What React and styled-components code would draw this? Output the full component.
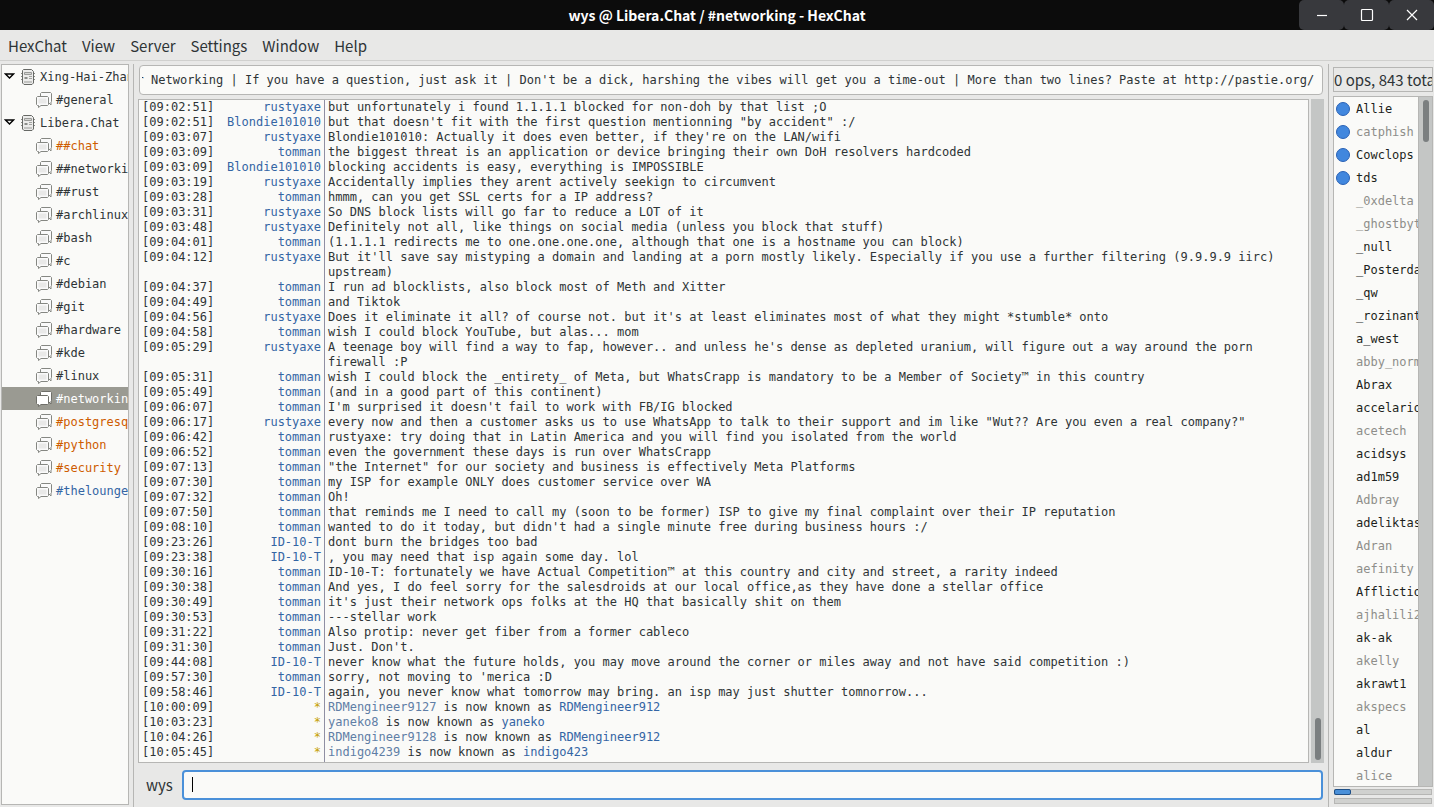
import React, { useLayoutEffect, useRef } from "react";
import styled, { createGlobalStyle, css } from "styled-components";

const ui = '"Noto Sans CJK SC", "Noto Sans", sans-serif';
const mono = '"DejaVu Sans Mono", "Liberation Mono", monospace';
const color = {
  chrome: "#e8e8e7",
  base: "#fafaf8",
  line: "#b6b6b4",
  text: "#2e3436",
  muted: "#8e8e8a",
  blue: "#3465a4",
  orange: "#ce5c00",
  yellow: "#c4a000",
  accent: "#4a90d9",
  trough: "#c4c6c5",
  thumb: "#7b7f80",
};

const GlobalStyle = createGlobalStyle`
  *, *::before, *::after { box-sizing: border-box; }
  body { margin: 0; background: ${color.chrome}; color: ${color.text}; font: 15px/24px ${ui}; overflow: hidden; }
  button, input { font: inherit; color: inherit; }
  ul { list-style: none; margin: 0; padding: 0; }
`;

const Window = styled.div`
  display: flex;
  flex-direction: column;
  height: 100vh;
  overflow: hidden;
`;

const TitleBar = styled.header`
  display: grid;
  grid-template-columns: 1fr auto 1fr;
  align-items: center;
  flex: none;
  height: 30px;
  background: #0c0c0c;
`;

const Title = styled.h1`
  grid-column: 2;
  margin: 0;
  color: #fff;
  font-size: 14px;
  line-height: 24px;
  font-weight: 700;
  white-space: nowrap;
`;

const WindowControls = styled.div`
  display: flex;
  justify-content: flex-end;
`;

const WindowButton = styled.button`
  display: grid;
  place-items: center;
  width: 45px;
  height: 30px;
  padding: 0;
  border: 0;
  border-radius: 5px;
  background: #38393d;
  color: #fff;
`;

const MenuBar = styled.nav`
  display: flex;
  align-items: center;
  gap: 15px;
  flex: none;
  height: 31px;
  margin-bottom: 3px;
  padding: 2px 8px 0;
  border-bottom: 1px solid #d0d0ce;
`;

const MenuItem = styled.button`
  padding: 0;
  border: 0;
  background: none;
  white-space: nowrap;
`;

const Panes = styled.main`
  display: flex;
  flex: 1;
  min-height: 0;
`;

const TreePane = styled.nav`
  flex: none;
  width: 128px;
  margin: 0 4px 2px 1px;
  border: 1px solid ${color.line};
  background: ${color.base};
  overflow: hidden;
`;

const treeColors = { hot: color.orange, data: color.blue };

const TreeRow = styled.li`
  display: flex;
  align-items: center;
  height: 23px;
  padding-left: ${(p) => (p.$root ? 1 : 34)}px;
  font: 12px/16px ${mono};
  white-space: nowrap;
  color: ${(p) => treeColors[p.$state] || color.text};
  ${(p) =>
    p.$state === "selected" &&
    css`
      background: #9a9a92;
      color: #fff;
    `}
`;

const TreeToggle = styled.button`
  display: grid;
  place-items: center;
  flex: none;
  width: 12px;
  height: 16px;
  margin-right: 5px;
  padding: 0;
  border: 0;
  background: none;
`;

const TreeIcon = styled.span`
  display: grid;
  flex: none;
  width: 18px;
  height: 16px;
  margin-right: 2px;
`;

const Splitter = styled.div`
  flex: none;
  width: 1px;
  background: ${color.line};
`;

const ChatPane = styled.section`
  display: flex;
  flex: 1;
  flex-direction: column;
  min-width: 0;
  padding: 0 4px 7px;
`;

const Topic = styled.input`
  flex: none;
  width: calc(100% - 2px);
  height: 30px;
  margin: 1px 0 4px 1px;
  padding: 0 8px 0 2px;
  border: 1px solid ${color.line};
  border-radius: 4px;
  background: ${color.base};
  outline: 0;
  && { font: 12px/16px ${mono}; }
`;

const LogRow = styled.div`
  display: flex;
  flex: 1;
  gap: 2px;
  min-height: 0;
`;

const Log = styled.div`
  display: flex;
  flex: 1;
  flex-direction: column;
  min-width: 0;
  border: 1px solid ${color.line};
  background: ${color.base};
  font: 12px/15px ${mono};
  overflow: hidden;
`;

const Message = styled.div`
  display: grid;
  grid-template-columns: 80px 102px 1fr;
  flex: none;
  padding-left: 3px;
`;

const Time = styled.time`
  white-space: pre;
`;

const Nick = styled.span`
  padding-right: 3px;
  text-align: right;
  white-space: pre;
  color: ${(p) => (p.$event ? color.yellow : color.blue)};
`;

const Body = styled.span`
  padding-left: 3px;
  border-left: 1px solid #8f8fa3;
`;

const OldName = styled.span`
  color: #5f7ea6;
`;

const NewName = styled.span`
  color: ${color.blue};
`;

const LogTail = styled.div`
  flex: 1;
  margin-left: 185px;
  border-left: 1px solid #8f8fa3;
`;

const Scrollbar = styled.div`
  display: flex;
  flex-direction: column;
  flex: none;
  justify-content: ${(p) => (p.$end ? "flex-end" : "flex-start")};
  width: 13px;
  padding: 3px 3px 3px 4px;
  background: ${color.trough};
`;

const Thumb = styled.div`
  width: 6px;
  height: 42px;
  border-radius: 3px;
  background: ${color.thumb};
`;

const Composer = styled.form`
  display: flex;
  align-items: center;
  flex: none;
  gap: 9px;
  height: 30px;
  margin-top: 7px;
  padding: 0 1px 0 8px;
`;

const InputWrap = styled.div`
  display: flex;
  flex: 1;
  position: relative;
`;

const MessageInput = styled.input`
  flex: 1;
  min-width: 0;
  height: 30px;
  padding: 0 8px;
  border: 2px solid ${color.accent};
  border-radius: 4px;
  background: ${color.base};
  outline: 0;
  && { font: 12px/16px ${mono}; }
`;

const Caret = styled.span`
  position: absolute;
  left: 10px;
  top: 7px;
  width: 1px;
  height: 15px;
  background: #000;
`;

const UsersPane = styled.aside`
  display: flex;
  flex: none;
  flex-direction: column;
  width: 105px;
  padding: 3px 1px 3px 4px;
`;

const UserCount = styled.div`
  flex: none;
  height: 25px;
  margin-bottom: 4px;
  border: 1px solid ${color.line};
  line-height: 24px;
  white-space: nowrap;
  overflow: hidden;
`;

const UserBox = styled.div`
  display: flex;
  flex: 1;
  min-height: 0;
  border: 1px solid ${color.line};
  background: ${color.base};
`;

const UserList = styled.ul`
  flex: 1;
  min-width: 0;
  overflow: hidden;
  border-right: 1px solid ${color.line};
`;

const User = styled.li`
  display: flex;
  align-items: center;
  gap: 6px;
  height: 23px;
  padding-left: 2px;
  font: 12px/16px ${mono};
  white-space: nowrap;
  color: ${(p) => (p.$away ? color.muted : "#1c1f20")};
`;

const OpMark = styled.span`
  flex: none;
  width: 14px;
  height: 14px;
  border-radius: 50%;
  ${(p) =>
    p.$shown &&
    css`
      border: 1px solid #2a62b5;
      background: #4187de;
    `}
`;

const Meter = styled.div`
  flex: none;
  height: 6px;
  margin: ${(p) => p.$gap}px 1px 0;
  border: 1px solid ${color.line};
  background: #d0d1cf;
`;

const MeterFill = styled.div`
  width: 17px;
  height: 6px;
  margin: -1px;
  border: 1px solid #1f4f86;
  border-radius: 2px;
  background: ${color.accent};
`;

const ServerIcon = () => (
  <svg width="16" height="16" viewBox="0 0 16 16" fill="none" aria-hidden="true">
    <path d="M1 4.5h2M1 7.500h2M1 10.500h2M13 4.500h2M13 7.500h2M13 10.500h2" stroke="#8b8d89" />
    <path d="M3.500.5h8l2 2v11.500l-1.500 1.500h-8L2.500 14V1.500z" fill="#ececeb" stroke="#666865" />
    <path d="M4.500 3.500h7v2h-7z" fill="#d5d6d4" stroke="#9a9b98" />
    <path d="M4.500 8h3v2h-3z" fill="#8b8d89" />
    <path d="M9 7.500h3M9 9.500h3" stroke="#a2a3a0" />
    <path d="M5 12v2M7 12v2M9 12v2M11 12v2" stroke="#9a9b98" />
  </svg>
);

const ChannelIcon = ({ selected }) => {
  const stroke = selected ? "#6f6f69" : "#858782";
  const fill = selected ? "#fff" : "#fafafa";
  return (
    <svg width="17" height="16" viewBox="0 0 17 16" fill="none" aria-hidden="true">
      <path d="M5.500.5h9l1 1v8l-.5.5v3l-2.500-2.500H4.500v-9z" fill={fill} stroke={stroke} />
      <path d="M1.500 4.500h10l1 1v7l-1 1H5l-2.500 2v-2h-1l-1-1v-7z" fill={fill} stroke={stroke} />
      <path d="M2.500 6.500h8v5h-8z" fill={selected ? "#fff" : "#e9e9e8"} />
    </svg>
  );
};

const ToggleIcon = () => (
  <svg width="11" height="7" viewBox="0 0 11 7" fill="none" aria-hidden="true">
    <path d="M1.500 1h8l-4 4z" stroke="#000" strokeWidth="1.400" />
  </svg>
);

const WindowGlyph = ({ d }) => (
  <svg width="14" height="14" viewBox="0 0 14 14" fill="none" stroke="#fff" strokeWidth="1.200" aria-hidden="true">
    <path d={d} />
  </svg>
);

const controls = [
  ["Minimize", "M2 7.500h10"],
  ["Maximize", "M2.500 1.500h9q1 0 1 1v9q0 1-1 1h-9q-1 0-1-1v-9q0-1 1-1z"],
  ["Close", "M2 2l10 10M12 2L2 12"],
];

const menus = ["HexChat", "View", "Server", "Settings", "Window", "Help"];

const tree = [
  ["Xing-Hai-Zhan", "root"],
  ["#general"],
  ["Libera.Chat", "root"],
  ["##chat", "hot"],
  ["##networking"],
  ["##rust"],
  ["#archlinux"],
  ["#bash"],
  ["#c"],
  ["#debian"],
  ["#git"],
  ["#hardware"],
  ["#kde"],
  ["#linux"],
  ["#networking", "selected"],
  ["#postgresql", "hot"],
  ["#python", "hot"],
  ["#security", "hot"],
  ["#thelounge", "data"],
];

const topic =
  "Computer Networking | If you have a question, just ask it | Don't be a dick, harshing the vibes will get you a time-out | More than two lines? Paste at http://pastie.org/";

const messages = [
  ["09:02:51", "rustyaxe", "but unfortunately i found 1.1.1.1 blocked for non-doh by that list ;O"],
  ["09:02:51", "Blondie101010", "but that doesn't fit with the first question mentionning \"by accident\" :/"],
  ["09:03:07", "rustyaxe", "Blondie101010: Actually it does even better, if they're on the LAN/wifi"],
  ["09:03:09", "tomman", "the biggest threat is an application or device bringing their own DoH resolvers hardcoded"],
  ["09:03:09", "Blondie101010", "blocking accidents is easy, everything is IMPOSSIBLE"],
  ["09:03:19", "rustyaxe", "Accidentally implies they arent actively seekign to circumvent"],
  ["09:03:28", "tomman", "hmmm, can you get SSL certs for a IP address?"],
  ["09:03:31", "rustyaxe", "So DNS block lists will go far to reduce a LOT of it"],
  ["09:03:48", "rustyaxe", "Definitely not all, like things on social media (unless you block that stuff)"],
  ["09:04:01", "tomman", "(1.1.1.1 redirects me to one.one.one.one, although that one is a hostname you can block)"],
  ["09:04:12", "rustyaxe", "But it'll save say mistyping a domain and landing at a porn mostly likely. Especially if you use a further filtering (9.9.9.9 iirc) upstream)"],
  ["09:04:37", "tomman", "I run ad blocklists, also block most of Meth and Xitter"],
  ["09:04:49", "tomman", "and Tiktok"],
  ["09:04:56", "rustyaxe", "Does it eliminate it all? of course not. but it's at least eliminates most of what they might *stumble* onto"],
  ["09:04:58", "tomman", "wish I could block YouTube, but alas... mom"],
  ["09:05:29", "rustyaxe", "A teenage boy will find a way to fap, however.. and unless he's dense as depleted uranium, will figure out a way around the porn firewall :P"],
  ["09:05:31", "tomman", "wish I could block the _entirety_ of Meta, but WhatsCrapp is mandatory to be a Member of Society™ in this country"],
  ["09:05:49", "tomman", "(and in a good part of this continent)"],
  ["09:06:07", "tomman", "I'm surprised it doesn't fail to work with FB/IG blocked"],
  ["09:06:17", "rustyaxe", "every now and then a customer asks us to use WhatsApp to talk to their support and im like \"Wut?? Are you even a real company?\""],
  ["09:06:42", "tomman", "rustyaxe: try doing that in Latin America and you will find you isolated from the world"],
  ["09:06:52", "tomman", "even the government these days is run over WhatsCrapp"],
  ["09:07:13", "tomman", "\"the Internet\" for our society and business is effectively Meta Platforms"],
  ["09:07:30", "tomman", "my ISP for example ONLY does customer service over WA"],
  ["09:07:32", "tomman", "Oh!"],
  ["09:07:50", "tomman", "that reminds me I need to call my (soon to be former) ISP to give my final complaint over their IP reputation"],
  ["09:08:10", "tomman", "wanted to do it today, but didn't had a single minute free during business hours :/"],
  ["09:23:26", "ID-10-T", "dont burn the bridges too bad"],
  ["09:23:38", "ID-10-T", ", you may need that isp again some day. lol"],
  ["09:30:16", "tomman", "ID-10-T: fortunately we have Actual Competition™ at this country and city and street, a rarity indeed"],
  ["09:30:38", "tomman", "And yes, I do feel sorry for the salesdroids at our local office,as they have done a stellar office"],
  ["09:30:49", "tomman", "it's just their network ops folks at the HQ that basically shit on them"],
  ["09:30:53", "tomman", "---stellar work"],
  ["09:31:22", "tomman", "Also protip: never get fiber from a former cableco"],
  ["09:31:30", "tomman", "Just. Don't."],
  ["09:44:08", "ID-10-T", "never know what the future holds, you may move around the corner or miles away and not have said competition :)"],
  ["09:57:30", "tomman", "sorry, not moving to 'merica :D"],
  ["09:58:46", "ID-10-T", "again, you never know what tomorrow may bring. an isp may just shutter tomnorrow..."],
];

const renames = [
  ["10:00:09", "RDMengineer9127", "RDMengineer912"],
  ["10:03:23", "yaneko8", "yaneko"],
  ["10:04:26", "RDMengineer9128", "RDMengineer912"],
  ["10:05:45", "indigo4239", "indigo423"],
];

const users = [
  ["Allie", 0, 1], ["catphish", 1, 1], ["Cowclops", 0, 1], ["tds", 0, 1],
  ["_0xdelta", 1], ["_ghostbyt", 1], ["_null"], ["_Posterda"], ["_qw"], ["_rozinant"],
  ["a_west"], ["abby_norm", 1], ["Abrax"], ["accelario"], ["acetech", 1], ["acidsys"],
  ["ad1m59"], ["Adbray", 1], ["adeliktas"], ["Adran", 1], ["aefinity", 1], ["Afflictio"],
  ["ajhalili2", 1], ["ak-ak"], ["akelly", 1], ["akrawt1"], ["akspecs", 1], ["al"],
  ["aldur"], ["alice", 1],
];

export default function App() {
  const topicRef = useRef(null);
  useLayoutEffect(() => {
    const el = topicRef.current;
    const toEnd = () => {
      el.scrollLeft = el.scrollWidth;
    };
    toEnd();
    window.addEventListener("resize", toEnd);
    return () => window.removeEventListener("resize", toEnd);
  }, []);

  return (
    <Window>
      <GlobalStyle />
      <TitleBar>
        <span />
        <Title>wys @ Libera.Chat / #networking - HexChat</Title>
        <WindowControls>
          {controls.map(([label, d]) => (
            <WindowButton key={label} aria-label={label}>
              <WindowGlyph d={d} />
            </WindowButton>
          ))}
        </WindowControls>
      </TitleBar>
      <MenuBar>
        {menus.map((m) => (
          <MenuItem key={m}>{m}</MenuItem>
        ))}
      </MenuBar>
      <Panes>
        <TreePane aria-label="Networks and channels">
          <ul>
            {tree.map(([name, state]) => {
              const root = state === "root";
              return (
                <TreeRow key={name} $root={root} $state={state}>
                  {root && (
                    <TreeToggle aria-label={`Collapse ${name}`}>
                      <ToggleIcon />
                    </TreeToggle>
                  )}
                  <TreeIcon>
                    {root ? <ServerIcon /> : <ChannelIcon selected={state === "selected"} />}
                  </TreeIcon>
                  {name}
                </TreeRow>
              );
            })}
          </ul>
        </TreePane>
        <Splitter />
        <ChatPane>
          <Topic ref={topicRef} aria-label="Topic" defaultValue={topic} />
          <LogRow>
            <Log role="log">
              {messages.map(([time, nick, text], i) => (
                <Message key={i}>
                  <Time>[{time}]</Time>
                  <Nick>{nick}</Nick>
                  <Body>{text}</Body>
                </Message>
              ))}
              {renames.map(([time, from, to]) => (
                <Message key={time}>
                  <Time>[{time}]</Time>
                  <Nick $event>*</Nick>
                  <Body>
                    <OldName>{from}</OldName> is now known as <NewName>{to}</NewName>
                  </Body>
                </Message>
              ))}
              <LogTail />
            </Log>
            <Scrollbar $end>
              <Thumb />
            </Scrollbar>
          </LogRow>
          <Composer onSubmit={(e) => e.preventDefault()}>
            <label htmlFor="message">wys</label>
            <InputWrap>
              <MessageInput id="message" autoComplete="off" />
              <Caret />
            </InputWrap>
          </Composer>
        </ChatPane>
        <Splitter />
        <UsersPane>
          <UserCount>0 ops, 843 tota</UserCount>
          <UserBox>
            <UserList>
              {users.map(([name, away, op]) => (
                <User key={name} $away={away}>
                  <OpMark $shown={op} />
                  {name}
                </User>
              ))}
            </UserList>
            <Scrollbar>
              <Thumb />
            </Scrollbar>
          </UserBox>
          <Meter $gap={2}>
            <MeterFill />
          </Meter>
          <Meter $gap={3} />
        </UsersPane>
      </Panes>
    </Window>
  );
}
